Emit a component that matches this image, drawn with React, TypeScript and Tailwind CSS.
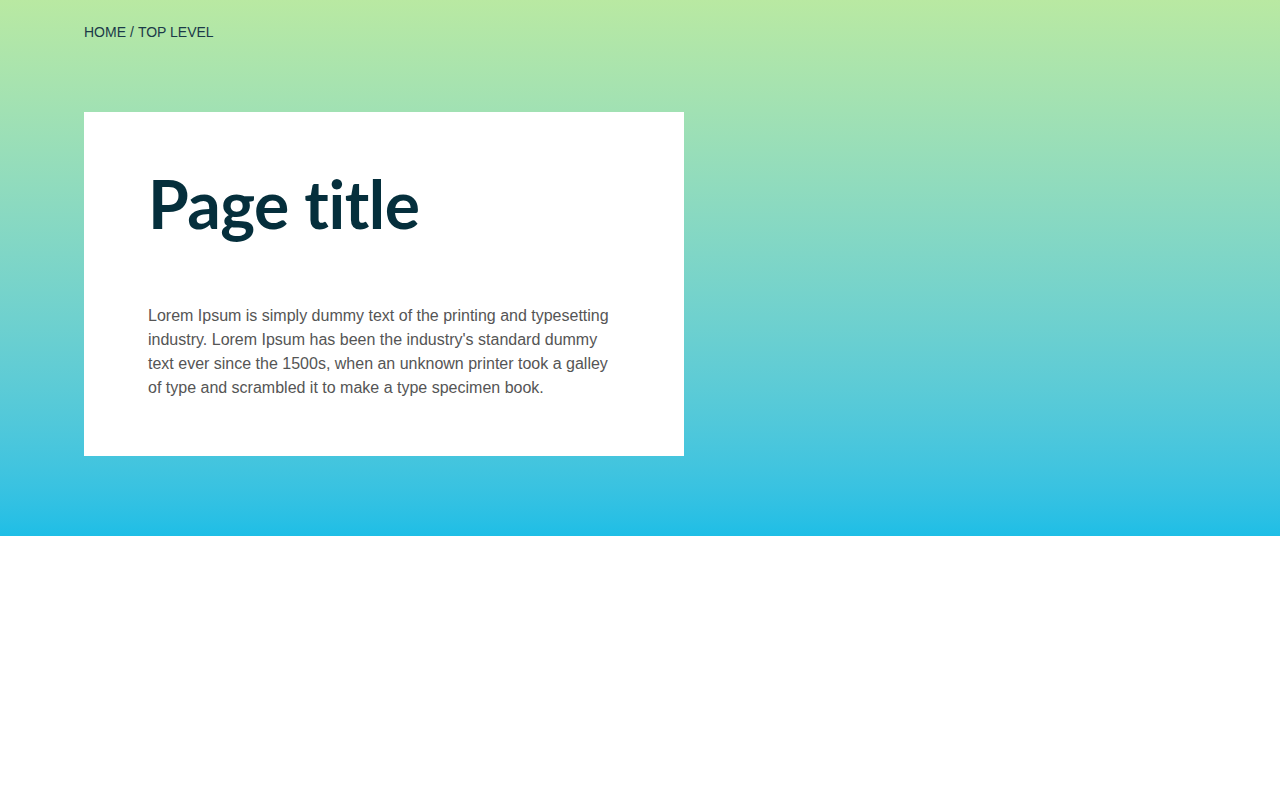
import React from 'react';

const App: React.FC = () => {
  return (
    <div className="min-h-[800px] bg-white font-['Liberation_Sans',Arial,sans-serif]">
      {/* Hero */}
      <section className="bg-gradient-to-b from-[#b9e9a2] to-[#1ebee6] px-[84px] pt-[22px] pb-[80px]">
        <nav className="text-[14px] leading-[20px] text-[#1b3a48]">
          <span>HOME</span>
          <span className="mx-[4px]">/</span>
          <span>TOP LEVEL</span>
        </nav>

        <div className="mt-[70px] w-[600px] bg-white px-[64px] pt-[52px] pb-[56px]">
          <h1 className="font-['Lato',sans-serif] text-[66px] font-bold leading-[80px] tracking-[-0.5px] text-[#052f3c]">
            Page title
          </h1>
          <p className="mt-[60px] text-[16px] leading-[24px] text-[#555555]">
            Lorem Ipsum is simply dummy text of the printing and typesetting industry. Lorem Ipsum has been the
            industry's standard dummy text ever since the 1500s, when an unknown printer took a galley of type and
            scrambled it to make a type specimen book.
          </p>
        </div>
      </section>
    </div>
  );
};

export default App;
